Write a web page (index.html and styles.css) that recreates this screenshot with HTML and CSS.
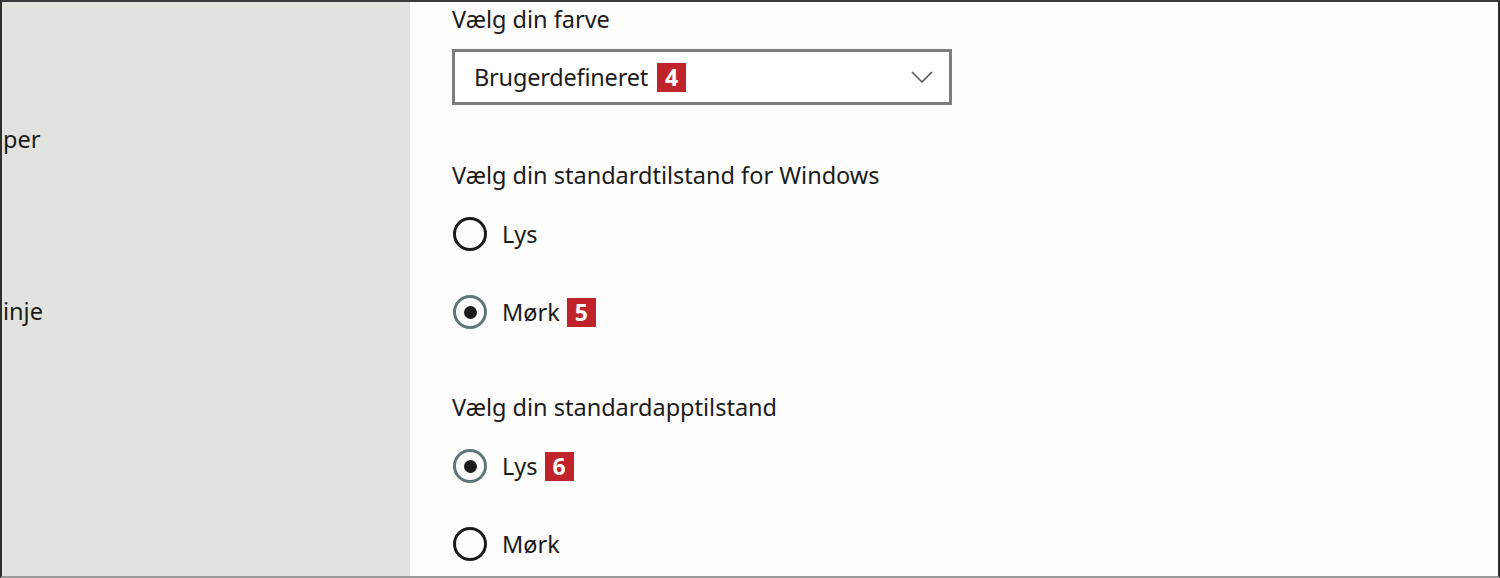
FILE: index.html
```html
<!DOCTYPE html>
<html lang="da">
<head>
    <meta charset="UTF-8">
    <title>Farver</title>
    <link rel="stylesheet" href="styles.css">
</head>
<body>
    <div class="frame">
        <nav class="sidebar">
            <div class="nav-item nav-first">per</div>
            <div class="nav-item nav-second">inje</div>
        </nav>
        <main class="content">
            <div class="label">Vælg din farve</div>
            <div class="dropdown">
                <span class="dropdown-text">Brugerdefineret</span>
                <span class="badge">4</span>
                <svg class="chevron" width="22" height="12" viewBox="0 0 22 12">
                    <polyline points="1,1 11,11 21,1" fill="none" stroke="#5a5a5a" stroke-width="1.6"/>
                </svg>
            </div>

            <div class="label label-gap">Vælg din standardtilstand for Windows</div>
            <div class="radio-row first-row">
                <span class="radio"></span>
                <span>Lys</span>
            </div>
            <div class="radio-row">
                <span class="radio checked"></span>
                <span>Mørk</span>
                <span class="badge">5</span>
            </div>

            <div class="label label-gap2">Vælg din standardapptilstand</div>
            <div class="radio-row first-row">
                <span class="radio checked"></span>
                <span>Lys</span>
                <span class="badge">6</span>
            </div>
            <div class="radio-row">
                <span class="radio"></span>
                <span>Mørk</span>
            </div>
        </main>
    </div>
</body>
</html>
```

FILE: styles.css
```css
html, body {
    margin: 0;
    padding: 0;
    height: 100%;
    overflow: hidden;
}
body {
    font-family: "Noto Sans", "Open Sans", sans-serif;
    font-size: 23.5px;
    color: #1b1b1b;
    background-color: #fdfdfb;
}
.frame {
    display: flex;
    height: 578px;
    box-sizing: border-box;
    border-top: 2px solid #3a3a3a;
    border-left: 2px solid #2e2e2e;
    border-right: 2px solid #2e2e2e;
    border-bottom: 2px solid #9a9a9a;
    overflow: hidden;
}
.sidebar {
    width: 408px;
    flex-shrink: 0;
    background-color: #e2e2de;
    padding-left: 1px;
    box-sizing: border-box;
}
.nav-item {
    line-height: 34px;
}
.nav-first {
    margin-top: 120px;
}
.nav-second {
    margin-top: 138px;
}
.content {
    flex: 1;
    padding-left: 42px;
}
.label {
    line-height: 34px;
}
.label-gap {
    margin-top: 53px;
}
.label-gap2 {
    margin-top: 58px;
}
.dropdown {
    display: flex;
    align-items: center;
    width: 500px;
    height: 56px;
    box-sizing: border-box;
    margin-top: 13px;
    padding: 0 16px 0 19px;
    border: 3px solid #7d7d7d;
    background-color: #fff;
}
.dropdown-text {
    letter-spacing: -0.2px;
}
.dropdown .badge {
    margin-left: 9px;
}
.chevron {
    margin-left: auto;
}
.badge {
    display: inline-flex;
    align-items: center;
    justify-content: center;
    width: 29px;
    height: 29px;
    margin-left: 7px;
    background-color: #c1232b;
    color: #fff;
    font-weight: 700;
    font-size: 23px;
    font-family: "Open Sans", "Noto Sans", sans-serif;
}
.radio-row {
    display: flex;
    align-items: center;
    height: 40px;
    margin-top: 38px;
}
.radio-row.first-row {
    margin-top: 22px;
}
.radio {
    width: 34px;
    height: 34px;
    box-sizing: border-box;
    border: 3px solid #1b1b1b;
    border-radius: 50%;
    margin-left: 1px;
    margin-right: 15px;
    display: flex;
    align-items: center;
    justify-content: center;
}
.radio.checked {
    border-color: #5e7676;
}
.radio.checked::after {
    content: "";
    width: 13px;
    height: 13px;
    border-radius: 50%;
    background-color: #1b1b1b;
}
```
